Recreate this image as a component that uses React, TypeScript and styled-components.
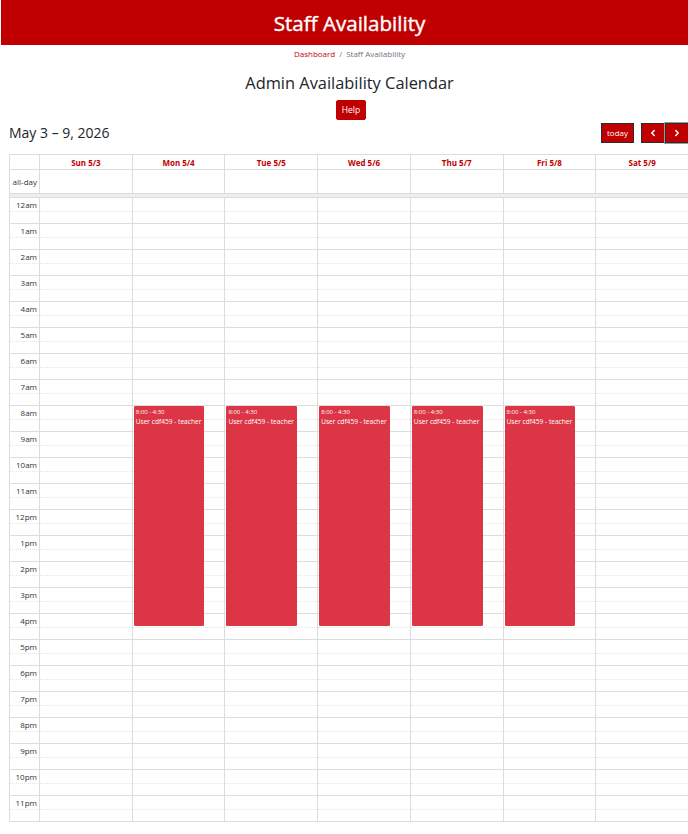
import styled, { createGlobalStyle } from 'styled-components';

const GlobalStyle = createGlobalStyle`
  *, *::before, *::after {
    box-sizing: border-box;
  }
  html, body {
    margin: 0;
    padding: 0;
    background: #fff;
    overflow-x: hidden;
  }
  body {
    font-family: 'Open Sans', 'Noto Sans', sans-serif;
    color: #212529;
  }
`;

const RED = '#c00000';
const BORDER = '#dddddd';
const SLOT = 26;

const Page = styled.div`
  width: 699px;
`;

const TopBar = styled.header`
  height: 45px;
  margin: 0 1px;
  background: ${RED};
  display: flex;
  align-items: center;
  justify-content: center;
`;

const TopTitle = styled.h1`
  margin: 0;
  font-size: 20.6px;
  font-weight: 400;
  -webkit-text-stroke: 0.4px #fff;
  color: #fff;
`;

const Breadcrumb = styled.nav`
  display: flex;
  justify-content: center;
  gap: 4px;
  padding-top: 3px;
  font-size: 8px;
  line-height: 12px;
  color: #6c757d;
`;

const Crumb = styled.span<{ $link?: boolean }>`
  color: ${({ $link }) => ($link ? RED : '#6c757d')};
`;

const PageTitle = styled.h2`
  margin: 12px 0 0;
  text-align: center;
  font-size: 16.4px;
  font-weight: 400;
  line-height: 22px;
  color: #212529;
`;

const HelpRow = styled.div`
  display: flex;
  justify-content: center;
  margin-top: 6px;
  padding-left: 3px;
`;

const RedButton = styled.button`
  height: 20px;
  padding: 0 5px;
  border: 1px solid ${RED};
  border-radius: 2px;
  background: ${RED};
  color: #fff;
  font-family: inherit;
  font-size: 8.5px;
  line-height: 1;
  cursor: pointer;
`;

const Calendar = styled.div`
  padding: 0 10px 0 9px;
`;

const Toolbar = styled.div`
  display: flex;
  align-items: center;
  justify-content: space-between;
  height: 23px;
  margin-top: 1px;
  margin-bottom: 10px;
`;

const RangeTitle = styled.h3`
  margin: 0;
  font-size: 14px;
  font-weight: 400;
  color: #212529;
`;

const ToolGroup = styled.div`
  display: flex;
  align-items: center;
  gap: 7px;
`;

const FcButton = styled.button<{ $focus?: boolean }>`
  display: flex;
  align-items: center;
  justify-content: center;
  height: 20px;
  min-width: 24px;
  padding: 0 5px;
  border: 1px solid #2c2c2c;
  outline: ${({ $focus }) => ($focus ? '1px solid #9a9a9a' : 'none')};
  background: ${RED};
  color: #fff;
  font-family: inherit;
  font-size: 8px;
  cursor: pointer;
`;

const ButtonPair = styled.div`
  display: flex;
`;

const Grid = styled.div`
  display: grid;
  grid-template-columns: 30px repeat(7, 1fr);
  border-top: 1px solid ${BORDER};
  border-left: 1px solid ${BORDER};
`;

const HeadCell = styled.div`
  height: 15px;
  border-right: 1px solid ${BORDER};
  border-bottom: 1px solid ${BORDER};
  display: flex;
  align-items: center;
  justify-content: center;
  font-size: 8px;
  font-weight: 700;
  color: ${RED};
`;

const AllDayCell = styled.div`
  height: 24px;
  border-right: 1px solid ${BORDER};
  border-bottom: 1px solid ${BORDER};
  display: flex;
  align-items: center;
  justify-content: flex-end;
  padding-right: 2px;
  font-size: 8px;
  color: #333;
`;

const Divider = styled.div`
  grid-column: 1 / -1;
  height: 4px;
  background: #eeeeee;
  border-right: 1px solid ${BORDER};
  border-bottom: 1px solid ${BORDER};
`;

const AxisColumn = styled.div`
  display: flex;
  flex-direction: column;
  border-right: 1px solid ${BORDER};
`;

const AxisSlot = styled.div`
  height: ${SLOT}px;
  border-bottom: 1px solid ${BORDER};
  padding: 2px 2px 0 0;
  text-align: right;
  font-size: 8px;
  line-height: 10px;
  color: #333;
  position: relative;
  &::after {
    content: '';
    position: absolute;
    left: 0;
    right: 0;
    top: 13px;
    border-top: 1px dotted #e6e6e6;
  }
`;

const DayColumn = styled.div`
  position: relative;
  display: flex;
  flex-direction: column;
  border-right: 1px solid ${BORDER};
`;

const DaySlot = styled.div`
  height: ${SLOT}px;
  border-bottom: 1px solid ${BORDER};
  position: relative;
  &::after {
    content: '';
    position: absolute;
    left: 0;
    right: 0;
    top: 13px;
    border-top: 1px dotted #e6e6e6;
  }
`;

const EventBlock = styled.div`
  position: absolute;
  left: 1px;
  right: 20px;
  background: #dc3545;
  border: 1px solid #dc3545;
  border-radius: 1px;
  color: #fff;
  padding: 1px 1px;
  overflow: hidden;
  z-index: 2;
`;

const EventTime = styled.div`
  font-size: 6px;
  line-height: 9px;
`;

const EventTitle = styled.div`
  font-size: 6.6px;
  line-height: 10px;
  white-space: nowrap;
`;

const days = ['Sun 5/3', 'Mon 5/4', 'Tue 5/5', 'Wed 5/6', 'Thu 5/7', 'Fri 5/8', 'Sat 5/9'];

const hours = [
  '12am', '1am', '2am', '3am', '4am', '5am', '6am', '7am', '8am', '9am', '10am', '11am',
  '12pm', '1pm', '2pm', '3pm', '4pm', '5pm', '6pm', '7pm', '8pm', '9pm', '10pm', '11pm',
];

// availability blocks: day index -> [start hour, end hour]
const events: Record<number, [number, number]> = {
  1: [8, 16.5],
  2: [8, 16.5],
  3: [8, 16.5],
  4: [8, 16.5],
  5: [8, 16.5],
};

const ChevronLeft = () => (
  <svg width="8" height="8" viewBox="0 0 8 8" fill="none">
    <path d="M5.2 1.5 L2.8 4 L5.2 6.5" stroke="#fff" strokeWidth="1.6" strokeLinecap="round" strokeLinejoin="round" />
  </svg>
);

const ChevronRight = () => (
  <svg width="8" height="8" viewBox="0 0 8 8" fill="none">
    <path d="M2.8 1.5 L5.2 4 L2.8 6.5" stroke="#fff" strokeWidth="1.6" strokeLinecap="round" strokeLinejoin="round" />
  </svg>
);

export default function App() {
  return (
    <Page>
      <GlobalStyle />
      <TopBar>
        <TopTitle>Staff Availability</TopTitle>
      </TopBar>
      <Breadcrumb>
        <Crumb $link>Dashboard</Crumb>
        <Crumb>/</Crumb>
        <Crumb>Staff Availability</Crumb>
      </Breadcrumb>
      <PageTitle>Admin Availability Calendar</PageTitle>
      <HelpRow>
        <RedButton>Help</RedButton>
      </HelpRow>

      <Calendar>
        <Toolbar>
          <RangeTitle>May 3 – 9, 2026</RangeTitle>
          <ToolGroup>
            <FcButton>today</FcButton>
            <ButtonPair>
              <FcButton>
                <ChevronLeft />
              </FcButton>
              <FcButton $focus>
                <ChevronRight />
              </FcButton>
            </ButtonPair>
          </ToolGroup>
        </Toolbar>

        <Grid>
          <HeadCell />
          {days.map((d) => (
            <HeadCell key={d}>{d}</HeadCell>
          ))}

          <AllDayCell>all-day</AllDayCell>
          {days.map((d) => (
            <AllDayCell key={d} />
          ))}

          <Divider />

          <AxisColumn>
            {hours.map((h) => (
              <AxisSlot key={h}>{h}</AxisSlot>
            ))}
          </AxisColumn>
          {days.map((d, i) => {
            const ev = events[i];
            return (
              <DayColumn key={d}>
                {hours.map((h) => (
                  <DaySlot key={h} />
                ))}
                {ev && (
                  <EventBlock
                    style={{ top: ev[0] * SLOT, height: (ev[1] - ev[0]) * SLOT - 1 }}
                  >
                    <EventTime>8:00 - 4:30</EventTime>
                    <EventTitle>User cdf459 - teacher</EventTitle>
                  </EventBlock>
                )}
              </DayColumn>
            );
          })}
        </Grid>
      </Calendar>
    </Page>
  );
}
